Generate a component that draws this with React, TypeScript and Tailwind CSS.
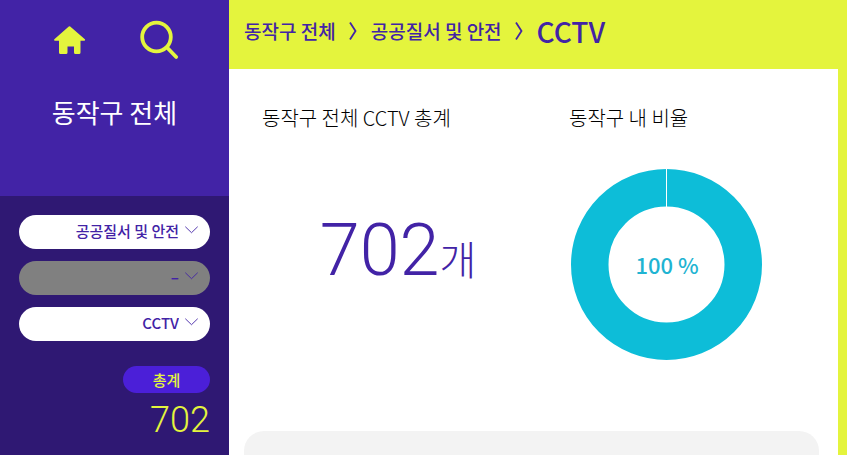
import React from "react";

function HomeIcon() {
  return (
    <svg width="32" height="30" viewBox="0 0 32 30" fill="#e4f43d" aria-hidden="true">
      <path d="M14.8 1.5a1 1 0 0 1 1.4 0L30.6 14c.9.8.6 1.700-.4 1.700H26.500v11.800a1.500 1.500 0 0 1-1.500 1.500h-3.500a1.500 1.500 0 0 1-1.500-1.500V21.500h-6.500v6a1.500 1.500 0 0 1-1.500 1.500H6.500a1.500 1.500 0 0 1-1.500-1.500V15.700H1c-1 0-1.300-.9-.4-1.700z" />
    </svg>
  );
}

function SearchIcon() {
  return (
    <svg width="40" height="40" viewBox="0 0 40 40" fill="none" stroke="#e4f43d" strokeLinecap="round" aria-hidden="true">
      <circle cx="16.500" cy="17" r="14.300" strokeWidth="3.800" />
      <path d="M27.500 28L36.200 37" strokeWidth="3.800" />
    </svg>
  );
}

type PickerProps = { label: string; value: string; disabled?: boolean };

function Picker({ label, value, disabled = false }: PickerProps) {
  return (
    <div className="relative">
      <select
        aria-label={label}
        defaultValue={value}
        disabled={disabled}
        className="block h-[34px] w-full appearance-none rounded-full bg-white pr-[31px] pb-[2px] pl-4 text-[15px] font-medium text-[#4223a6] [text-align-last:right] disabled:bg-[#808080] disabled:font-bold disabled:opacity-100"
      >
        <option>{value}</option>
      </select>
      <svg
        className="pointer-events-none absolute top-[11px] right-3"
        width="13"
        height="8"
        viewBox="0 0 13 8"
        fill="none"
        stroke="#4223a6"
        strokeWidth=".9"
        aria-hidden="true"
      >
        <path d="M.3.7l6.200 6 6.200-6" />
      </svg>
    </div>
  );
}

function Separator() {
  return (
    <svg className="mx-[13px] shrink-0" width="9" height="18" viewBox="0 0 9 18" fill="none" stroke="#4223a6" strokeWidth="1.800" aria-hidden="true">
      <path d="M1 .5L6.500 9 1 17.500" />
    </svg>
  );
}

function Sidebar() {
  return (
    <aside className="flex w-[229px] shrink-0 flex-col bg-[#2f1873]">
      <div className="h-[196px] bg-[#4223a6] pt-5 text-center">
        <nav className="flex justify-center gap-[54px] pl-1">
          <a href="#home" aria-label="홈" className="pt-[5px]">
            <HomeIcon />
          </a>
          <a href="#search" aria-label="검색">
            <SearchIcon />
          </a>
        </nav>
        <h1 className="mt-[34px] text-[26px] leading-9 text-white">동작구 전체</h1>
      </div>
      <div className="px-[19px] pt-[19px]">
        <div className="flex flex-col gap-3">
          <Picker label="대분류" value="공공질서 및 안전" />
          <Picker label="중분류" value="–" disabled />
          <Picker label="소분류" value="CCTV" />
        </div>
        <div className="mt-[25px] flex flex-col items-end">
          <span className="w-[87px] rounded-full bg-[#4b1fd8] text-center text-[15px] leading-[27px] font-medium text-[#e4f43d]">
            총계
          </span>
          <span className="font-[Roboto] text-[36px] leading-[54px] font-light text-[#e4f43d]">702</span>
        </div>
      </div>
    </aside>
  );
}

function RatioChart() {
  return (
    <svg className="h-48 w-48" viewBox="0 0 192 192" role="img" aria-label="100 %">
      <circle cx="96.500" cy="95.500" r="76.750" fill="none" stroke="#0dbdd8" strokeWidth="37.500" />
      <path d="M96.500 0v39" stroke="#fff" strokeWidth="1" />
      <text
        x="97"
        y="105"
        textAnchor="middle"
        className="fill-[#1fb4d2] text-[22px] font-medium"
      >
        100 %
      </text>
    </svg>
  );
}

export default function App() {
  return (
    <div className="flex h-screen overflow-hidden bg-white font-['Noto_Sans_CJK_KR',sans-serif]">
      <Sidebar />
      <main className="flex min-w-0 flex-1 flex-col">
        <header className="h-[69px] shrink-0 bg-[#e4f43d] px-[15px] text-[#4223a6]">
          <nav aria-label="현재 위치" className="flex h-[62px] items-center text-[19px] font-medium">
            <a href="#all">동작구 전체</a>
            <Separator />
            <a href="#safety">공공질서 및 안전</a>
            <Separator />
            <span className="text-[28px] leading-8">CCTV</span>
          </nav>
        </header>
        <div className="flex-1 border-r-[9px] border-[#e4f43d] pr-[19px] pl-[15px]">
          <div className="grid h-[362px] grid-cols-[307fr_250fr] pt-[34px] pl-[18px]">
            <section className="pr-[35px]">
              <h2 className="text-xl leading-[30px] font-light whitespace-nowrap">동작구 전체 CCTV 총계</h2>
              <p className="mt-[76px] text-center leading-[84px] font-light whitespace-nowrap text-[#4223a6]">
                <span className="font-[Roboto] text-[72px]">702</span>
                <span className="text-[40px] font-light">개</span>
              </p>
            </section>
            <section>
              <h2 className="text-xl leading-[30px] font-light whitespace-nowrap">동작구 내 비율</h2>
              <div className="mt-9 pl-px">
                <RatioChart />
              </div>
            </section>
          </div>
          <div className="h-10 rounded-t-[20px] bg-[#f3f3f3]" />
        </div>
      </main>
    </div>
  );
}
